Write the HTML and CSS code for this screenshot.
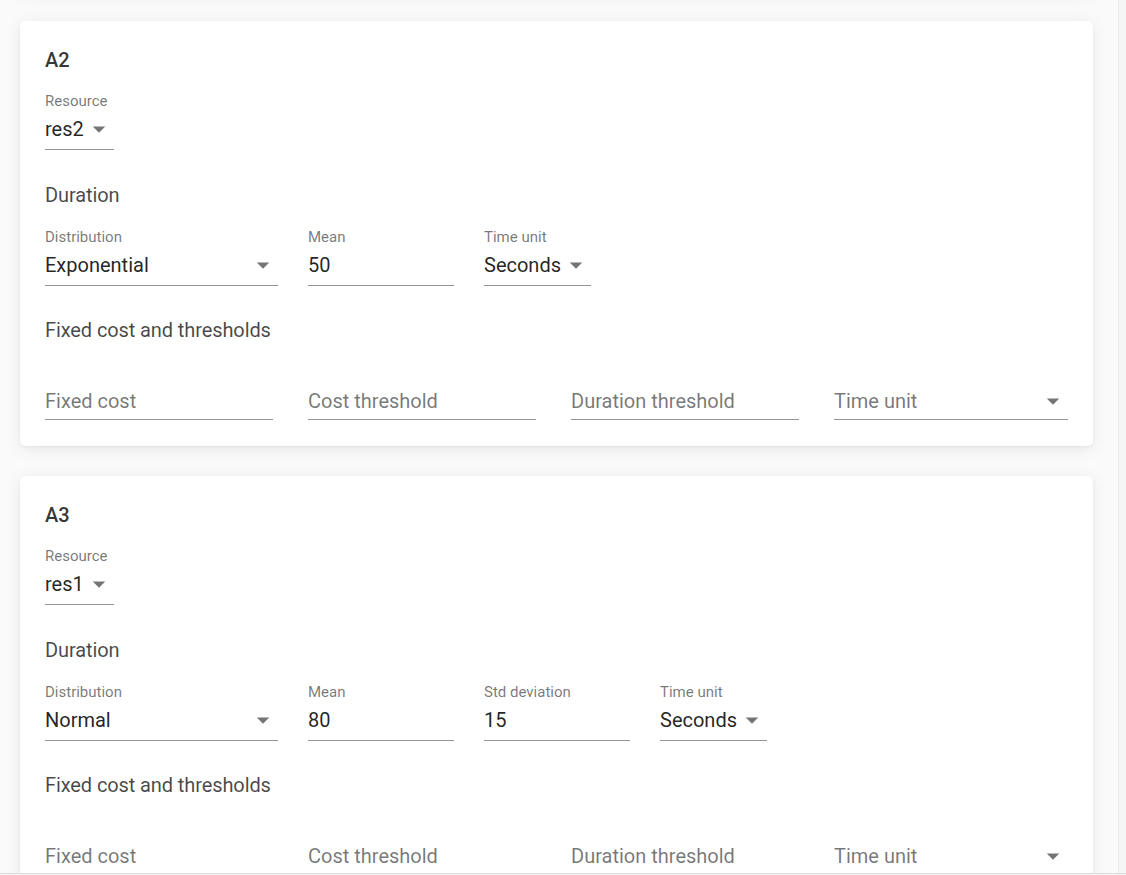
FILE: index.html
```html
<!DOCTYPE html>
<html lang="en">
<head>
<meta charset="utf-8">
<title>Activities</title>
<link rel="stylesheet" href="styles.css">
</head>
<body>
<div class="viewport">
  <main class="main">
    <div class="stack">
      <section class="card stub"></section>

      <section class="card">
        <h2 class="title">A2</h2>
        <div class="row">
          <div class="field">
            <span class="label">Resource</span>
            <div class="control"><span class="value">res2</span><svg class="caret" viewBox="0 0 24 24"><path d="M7 10l5 5 5-5z"/></svg></div>
          </div>
        </div>
        <h3 class="heading">Duration</h3>
        <div class="row">
          <div class="field w-dist">
            <span class="label">Distribution</span>
            <div class="control"><span class="value">Exponential</span><svg class="caret" viewBox="0 0 24 24"><path d="M7 10l5 5 5-5z"/></svg></div>
          </div>
          <div class="field w-num">
            <span class="label">Mean</span>
            <div class="control"><span class="value">50</span></div>
          </div>
          <div class="field">
            <span class="label">Time unit</span>
            <div class="control"><span class="value">Seconds</span><svg class="caret" viewBox="0 0 24 24"><path d="M7 10l5 5 5-5z"/></svg></div>
          </div>
        </div>
        <h3 class="heading heading-fixed">Fixed cost and thresholds</h3>
        <div class="grid4">
          <div class="field empty"><div class="control"><span class="value placeholder">Fixed cost</span></div></div>
          <div class="field empty"><div class="control"><span class="value placeholder">Cost threshold</span></div></div>
          <div class="field empty"><div class="control"><span class="value placeholder">Duration threshold</span></div></div>
          <div class="field empty"><div class="control"><span class="value placeholder">Time unit</span><svg class="caret" viewBox="0 0 24 24"><path d="M7 10l5 5 5-5z"/></svg></div></div>
        </div>
      </section>

      <section class="card">
        <h2 class="title">A3</h2>
        <div class="row">
          <div class="field">
            <span class="label">Resource</span>
            <div class="control"><span class="value">res1</span><svg class="caret" viewBox="0 0 24 24"><path d="M7 10l5 5 5-5z"/></svg></div>
          </div>
        </div>
        <h3 class="heading">Duration</h3>
        <div class="row">
          <div class="field w-dist">
            <span class="label">Distribution</span>
            <div class="control"><span class="value">Normal</span><svg class="caret" viewBox="0 0 24 24"><path d="M7 10l5 5 5-5z"/></svg></div>
          </div>
          <div class="field w-num">
            <span class="label">Mean</span>
            <div class="control"><span class="value">80</span></div>
          </div>
          <div class="field w-num">
            <span class="label">Std deviation</span>
            <div class="control"><span class="value">15</span></div>
          </div>
          <div class="field">
            <span class="label">Time unit</span>
            <div class="control"><span class="value">Seconds</span><svg class="caret" viewBox="0 0 24 24"><path d="M7 10l5 5 5-5z"/></svg></div>
          </div>
        </div>
        <h3 class="heading heading-fixed">Fixed cost and thresholds</h3>
        <div class="grid4">
          <div class="field empty"><div class="control"><span class="value placeholder">Fixed cost</span></div></div>
          <div class="field empty"><div class="control"><span class="value placeholder">Cost threshold</span></div></div>
          <div class="field empty"><div class="control"><span class="value placeholder">Duration threshold</span></div></div>
          <div class="field empty"><div class="control"><span class="value placeholder">Time unit</span><svg class="caret" viewBox="0 0 24 24"><path d="M7 10l5 5 5-5z"/></svg></div></div>
        </div>
      </section>
    </div>
  </main>
  <div class="vscroll"></div>
</div>
<div class="hscroll"></div>
</body>
</html>
```

FILE: styles.css
```css
html, body {
  margin: 0;
  padding: 0;
}

body {
  font-family: Roboto, "Noto Sans", "Liberation Sans", sans-serif;
  background: #fafafa;
  height: 875px;
  display: flex;
  flex-direction: column;
  overflow: hidden;
}

.viewport {
  flex: 1;
  display: flex;
  min-height: 0;
  overflow: hidden;
}

.main {
  flex: 1;
  padding: 0 25px 0 20px;
  overflow: hidden;
}

.vscroll {
  width: 7px;
  flex: none;
  border-left: 1px solid #ebebeb;
  background: #f5f5f5;
}

.hscroll {
  height: 1px;
  flex: none;
  border-top: 1px solid #dcdcdc;
  background: #f3f3f3;
}

.stack {
  display: flex;
  flex-direction: column;
  gap: 30px;
  margin-top: -69px;
}

.card {
  background: #fff;
  border-radius: 5px;
  padding: 24px 25px 26px;
  box-shadow: 0 3px 16px rgba(0, 0, 0, 0.08), 0 1px 3px rgba(0, 0, 0, 0.05);
}

.card.stub {
  height: 60px;
  padding: 0;
}

.title {
  margin: 0 0 15px;
  font-size: 20px;
  line-height: 30px;
  font-weight: 500;
  color: rgba(0, 0, 0, 0.8);
}

.heading {
  margin: 30px 0 16px;
  font-size: 20px;
  line-height: 30px;
  font-weight: 400;
  color: rgba(0, 0, 0, 0.72);
  letter-spacing: -0.1px;
}

.heading-fixed {
  margin: 29px 0 15px;
}

.row {
  display: flex;
  gap: 30px;
}

.grid4 {
  display: grid;
  grid-template-columns: 228px 228px 228px 1fr;
  column-gap: 35px;
}

.field {
  display: flex;
  flex-direction: column;
  height: 60px;
  box-sizing: border-box;
  border-bottom: 1px solid rgba(0, 0, 0, 0.42);
}

.w-dist {
  width: 233px;
}

.w-num {
  width: 146px;
}

.label {
  margin-top: 4px;
  font-size: 15px;
  line-height: 15px;
  color: rgba(0, 0, 0, 0.54);
  white-space: nowrap;
}

.control {
  display: flex;
  align-items: center;
  height: 24px;
  margin-top: 8px;
}

.field.empty .control {
  margin-top: 29px;
}

.value {
  flex: 1;
  font-size: 20px;
  line-height: 24px;
  color: rgba(0, 0, 0, 0.87);
  white-space: nowrap;
}

.value.placeholder {
  color: rgba(0, 0, 0, 0.54);
}

.caret {
  flex: none;
  width: 30px;
  height: 30px;
  margin: -3px 0;
  fill: rgba(0, 0, 0, 0.54);
}
```
